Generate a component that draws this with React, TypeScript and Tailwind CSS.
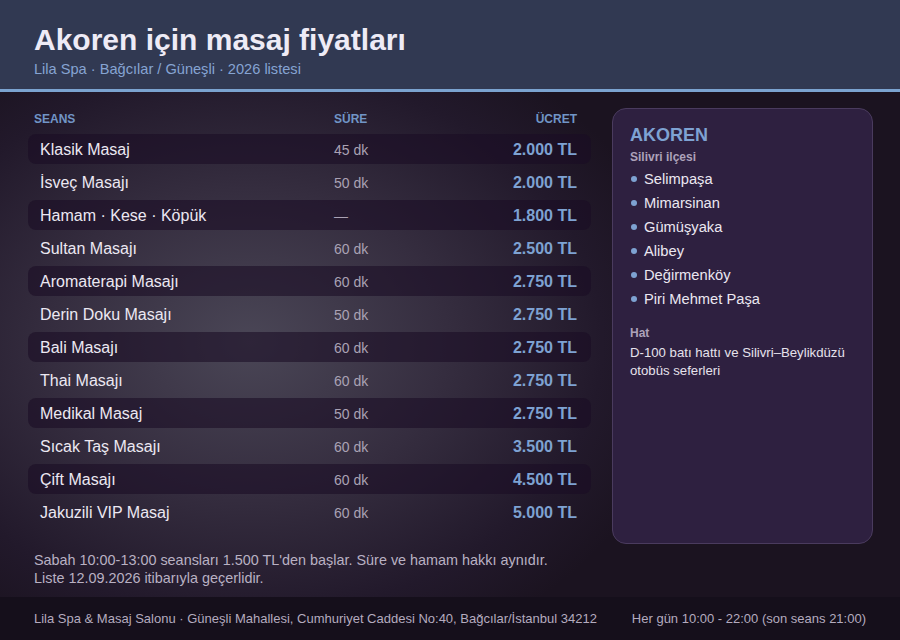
import React from "react";

const rows: [string, string, string][] = [
  ["Klasik Masaj", "45 dk", "2.000 TL"],
  ["İsveç Masajı", "50 dk", "2.000 TL"],
  ["Hamam · Kese · Köpük", "—", "1.800 TL"],
  ["Sultan Masajı", "60 dk", "2.500 TL"],
  ["Aromaterapi Masajı", "60 dk", "2.750 TL"],
  ["Derin Doku Masajı", "50 dk", "2.750 TL"],
  ["Bali Masajı", "60 dk", "2.750 TL"],
  ["Thai Masajı", "60 dk", "2.750 TL"],
  ["Medikal Masaj", "50 dk", "2.750 TL"],
  ["Sıcak Taş Masajı", "60 dk", "3.500 TL"],
  ["Çift Masajı", "60 dk", "4.500 TL"],
  ["Jakuzili VIP Masaj", "60 dk", "5.000 TL"],
];

const areas = ["Selimpaşa", "Mimarsinan", "Gümüşyaka", "Alibey", "Değirmenköy", "Piri Mehmet Paşa"];

export default function App() {
  return (
    <div className="w-[900px] h-[640px] overflow-hidden flex flex-col [font-family:'Liberation_Sans',Arial,sans-serif] bg-[#1c1421]">
      <header className="h-[92px] shrink-0 bg-[#313952] border-b-[3px] border-[#7ba3d0] px-[34px] pt-[23px]">
        <h1 className="text-[30px] leading-[34px] font-bold text-[#eeebf6]">Akoren için masaj fiyatları</h1>
        <p className="mt-[3px] text-[14.6px] leading-[18px] text-[#86a4d2]">Lila Spa · Bağcılar / Güneşli · 2026 listesi</p>
      </header>

      <main className="flex-1 flex flex-col bg-[radial-gradient(ellipse_440px_340px_at_250px_250px,#4a4656_0%,#352d3f_45%,#22192b_80%,#1b1320_100%)]">
        <div className="flex gap-[21px] pl-[28px] pr-[27px] pt-[16px]">
          <section className="w-[563px]">
            <div className="grid grid-cols-[300px_1fr_auto] h-[21px] items-center pl-[6px] pr-[14px] text-[12px] leading-[16px] font-bold text-[#7195c6]">
              <span>SEANS</span>
              <span>SÜRE</span>
              <span>ÜCRET</span>
            </div>
            <div className="mt-[5px] flex flex-col gap-[3px]">
              {rows.map((r, i) => (
                <div
                  key={r[0]}
                  className={
                    "grid grid-cols-[294px_1fr_auto] h-[30px] items-center pl-[12px] pr-[14px] rounded-[8px] " +
                    (i % 2 === 0 ? "bg-[rgba(26,12,36,0.58)]" : "")
                  }
                >
                  <span className="text-[16px] leading-[20px] pt-[2px] text-[#ece8f2]">{r[0]}</span>
                  <span className="text-[14px] leading-[20px] pt-[2px] text-[#aaa2b4]">{r[1]}</span>
                  <span className="text-[16px] leading-[20px] pt-[2px] font-bold text-[#7ea2d2]">{r[2]}</span>
                </div>
              ))}
            </div>
          </section>

          <aside className="w-[261px] h-[436px] rounded-[14px] bg-[#2e2040] border border-[#4a3b5e] px-[17px] pt-[15px]">
            <h2 className="text-[18px] leading-[22px] font-bold text-[#7ea2d2]">AKOREN</h2>
            <p className="mt-[3px] text-[12px] leading-[16px] font-bold text-[#ada2ba]">Silivri ilçesi</p>
            <ul className="mt-[2px] flex flex-col">
              {areas.map((a) => (
                <li key={a} className="flex items-center h-[24px] text-[14.7px] text-[#ebe7f1]">
                  <span className="w-[6px] h-[6px] rounded-full bg-[#7ea2d2] ml-[1px] mr-[7px]" />
                  {a}
                </li>
              ))}
            </ul>
            <p className="mt-[14px] text-[12px] leading-[16px] font-bold text-[#ada2ba]">Hat</p>
            <p className="mt-[3px] text-[13.2px] leading-[18px] text-[#e6e2ec]">
              D-100 batı hattı ve Silivri–Beylikdüzü otobüs seferleri
            </p>
          </aside>
        </div>

        <div className="mt-[7px] px-[34px] text-[14.4px] leading-[18px] text-[#b9b1c3]">
          <p>Sabah 10:00-13:00 seansları 1.500 TL'den başlar. Süre ve hamam hakkı aynıdır.</p>
          <p>Liste 12.09.2026 itibarıyla geçerlidir.</p>
        </div>
      </main>

      <footer className="h-[43px] shrink-0 bg-[#150f1b] flex items-center justify-between px-[34px] text-[13px] text-[#b4abbf]">
        <span>Lila Spa &amp; Masaj Salonu · Güneşli Mahallesi, Cumhuriyet Caddesi No:40, Bağcılar/İstanbul 34212</span>
        <span>Her gün 10:00 - 22:00 (son seans 21:00)</span>
      </footer>
    </div>
  );
}
